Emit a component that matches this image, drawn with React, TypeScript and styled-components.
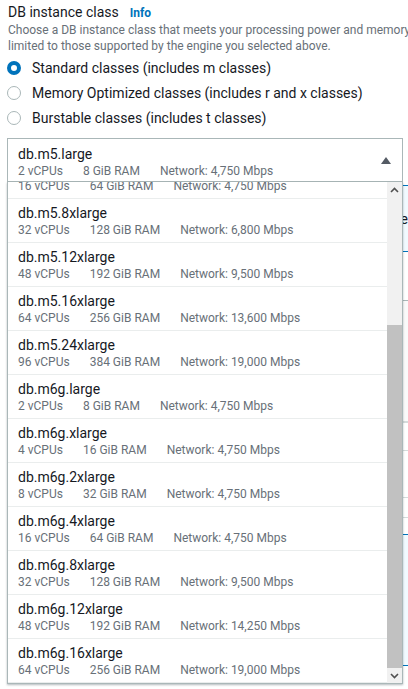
import React, { useLayoutEffect, useRef } from "react";
import styled, { createGlobalStyle } from "styled-components";

const GlobalStyle = createGlobalStyle`
  html, body { margin: 0; padding: 0; background: #ffffff; overflow: hidden; }
  body {
    font-family: Roboto, "Noto Sans", "Liberation Sans", sans-serif;
    color: #16191f;
  }
  * { box-sizing: border-box; }
`;

const Page = styled.div`
  width: 408px;
  height: 689px;
  overflow: hidden;
  padding: 2px 0 0 7px;
`;

const Field = styled.div`
  width: 396px;
  display: flex;
  flex-direction: column;
`;

const LabelRow = styled.div`
  display: flex;
  align-items: baseline;
  gap: 11px;
  height: 20px;
  line-height: 20px;
  padding-left: 1px;
`;

const Title = styled.span`
  font-size: 14px;
  color: #16191f;
`;

const InfoLink = styled.a`
  font-size: 12px;
  font-weight: 700;
  color: #0073bb;
  text-decoration: none;
`;

const Description = styled.div`
  font-size: 12px;
  line-height: 16px;
  color: #687078;
  white-space: nowrap;
  padding-left: 1px;
`;

const RadioGroup = styled.div`
  display: flex;
  flex-direction: column;
  margin-top: 1px;
`;

const RadioRow = styled.label`
  display: flex;
  align-items: center;
  height: 25px;
  gap: 11px;
  font-size: 14px;
  color: #16191f;
`;

const RadioCircle = styled.span<{ $checked?: boolean }>`
  width: 14px;
  height: 14px;
  border-radius: 50%;
  flex: none;
  background: #ffffff;
  border: ${(p) => (p.$checked ? "4.5px solid #0073bb" : "1px solid #aab7b8")};
`;

const SelectWrap = styled.div`
  position: relative;
  margin-top: 8px;
`;

const Trigger = styled.div`
  height: 44px;
  border: 1px solid #aab7b8;
  padding: 5px 10px 1px 10px;
  display: flex;
  align-items: center;
  justify-content: space-between;
`;

const OptionBody = styled.div`
  display: flex;
  flex-direction: column;
`;

const OptionName = styled.div`
  font-size: 14px;
  line-height: 18px;
  color: #16191f;
`;

const OptionSpecs = styled.div`
  display: flex;
  gap: 20px;
  font-size: 12px;
  line-height: 17px;
  color: #687078;
  white-space: nowrap;
`;

const Caret = styled.svg`
  width: 10px;
  height: 7px;
  margin-right: 1px;
  margin-top: -3px;
`;

const Dropdown = styled.div`
  position: absolute;
  top: 100%;
  left: 0;
  width: 396px;
  height: 502px;
  background: #ffffff;
  border: 1px solid #aab7b8;
  border-top: none;
  box-shadow: 0 1px 2px rgba(0, 28, 36, 0.3);
  display: flex;
  z-index: 10;
`;

const List = styled.ul`
  list-style: none;
  margin: 0;
  padding: 0;
  flex: 1;
  height: 100%;
  overflow-y: scroll;
  scrollbar-width: none;
  &::-webkit-scrollbar { display: none; }
`;

const Item = styled.li`
  height: 44px;
  padding: 5px 10px 0 10px;
  border-bottom: 1px solid #eaeded;
`;

const ScrollBar = styled.div`
  width: 15px;
  height: 100%;
  background: #f1f1f1;
  display: flex;
  flex-direction: column;
`;

const ScrollButton = styled.div`
  height: 15px;
  flex: none;
  display: flex;
  align-items: center;
  justify-content: center;
`;

const Track = styled.div`
  flex: 1;
  display: flex;
  flex-direction: column;
  justify-content: flex-end;
`;

const Thumb = styled.div`
  height: 343px;
  background: #c1c1c1;
`;

/* content of the page that lies under the open dropdown */
const Underlay = styled.div`
  width: 401px;
  display: flex;
  flex-direction: column;
`;

const InfoBox = styled.div`
  margin-top: 3px;
  height: 67px;
  border-top: 1px solid #0073bb;
  border-bottom: 1px solid #0073bb;
  background: #f1faff;
  display: flex;
  align-items: center;
  justify-content: flex-end;
  font-size: 14px;
  color: #16191f;
`;

const Section = styled.div`
  margin-top: 48px;
  height: 122px;
  border-top: 1px solid #aab7b8;
  background: #fafafa;
`;

const Rule = styled.div<{ $gap: number }>`
  margin-top: ${(p) => p.$gap}px;
  border-top: 1px solid #d5dbdb;
`;

const BlueBox = styled.div`
  margin-top: 16px;
  height: 132px;
  border-top: 1px solid #0073bb;
  border-bottom: 1px solid #0073bb;
  background: #f1faff;
`;

type Inst = { name: string; cpu: number; ram: number; net: string };

const instances: Inst[] = [
  { name: "db.m5.large", cpu: 2, ram: 8, net: "4,750" },
  { name: "db.m5.xlarge", cpu: 4, ram: 16, net: "4,750" },
  { name: "db.m5.2xlarge", cpu: 8, ram: 32, net: "4,750" },
  { name: "db.m5.4xlarge", cpu: 16, ram: 64, net: "4,750" },
  { name: "db.m5.8xlarge", cpu: 32, ram: 128, net: "6,800" },
  { name: "db.m5.12xlarge", cpu: 48, ram: 192, net: "9,500" },
  { name: "db.m5.16xlarge", cpu: 64, ram: 256, net: "13,600" },
  { name: "db.m5.24xlarge", cpu: 96, ram: 384, net: "19,000" },
  { name: "db.m6g.large", cpu: 2, ram: 8, net: "4,750" },
  { name: "db.m6g.xlarge", cpu: 4, ram: 16, net: "4,750" },
  { name: "db.m6g.2xlarge", cpu: 8, ram: 32, net: "4,750" },
  { name: "db.m6g.4xlarge", cpu: 16, ram: 64, net: "4,750" },
  { name: "db.m6g.8xlarge", cpu: 32, ram: 128, net: "9,500" },
  { name: "db.m6g.12xlarge", cpu: 48, ram: 192, net: "14,250" },
  { name: "db.m6g.16xlarge", cpu: 64, ram: 256, net: "19,000" },
];

const Specs = ({ i }: { i: Inst }) => (
  <OptionSpecs>
    <span>{i.cpu} vCPUs</span>
    <span>{i.ram} GiB RAM</span>
    <span>Network: {i.net} Mbps</span>
  </OptionSpecs>
);

const Chevron = ({ down }: { down?: boolean }) => (
  <svg width="9" height="6" viewBox="0 0 9 6">
    <polyline
      points={down ? "1,1 4.5,4.5 8,1" : "1,5 4.5,1.5 8,5"}
      fill="none"
      stroke="#505050"
      strokeWidth="1.6"
    />
  </svg>
);

export default function App() {
  const listRef = useRef<HTMLUListElement>(null);
  useLayoutEffect(() => {
    const el = listRef.current;
    if (el) el.scrollTop = el.scrollHeight;
  }, []);

  return (
    <>
      <GlobalStyle />
      <Page>
        <Field>
          <LabelRow>
            <Title>DB instance class</Title>
            <InfoLink href="#">Info</InfoLink>
          </LabelRow>
          <Description>
            Choose a DB instance class that meets your processing power and memory requirements. The DB instance class options below are
            <br />
            limited to those supported by the engine you selected above.
          </Description>
          <RadioGroup>
            <RadioRow>
              <RadioCircle $checked />
              Standard classes (includes m classes)
            </RadioRow>
            <RadioRow>
              <RadioCircle />
              Memory Optimized classes (includes r and x classes)
            </RadioRow>
            <RadioRow>
              <RadioCircle />
              Burstable classes (includes t classes)
            </RadioRow>
          </RadioGroup>
          <SelectWrap>
            <Trigger>
              <OptionBody>
                <OptionName>{instances[0].name}</OptionName>
                <Specs i={instances[0]} />
              </OptionBody>
              <Caret viewBox="0 0 10 7">
                <polygon points="0,7 5,0 10,7" fill="#545b64" />
              </Caret>
            </Trigger>
            <Dropdown>
              <List ref={listRef}>
                {instances.map((i) => (
                  <Item key={i.name}>
                    <OptionName>{i.name}</OptionName>
                    <Specs i={i} />
                  </Item>
                ))}
              </List>
              <ScrollBar>
                <ScrollButton>
                  <Chevron />
                </ScrollButton>
                <Track>
                  <Thumb />
                </Track>
                <ScrollButton>
                  <Chevron down />
                </ScrollButton>
              </ScrollBar>
            </Dropdown>
          </SelectWrap>
        </Field>
        <Underlay>
          <InfoBox>Choose a storage type</InfoBox>
          <Section>
            <Rule $gap={120} />
          </Section>
          <Rule $gap={0} />
          <Rule $gap={27} />
          <Rule $gap={46} />
          <Rule $gap={19} />
          <BlueBox />
        </Underlay>
      </Page>
    </>
  );
}
